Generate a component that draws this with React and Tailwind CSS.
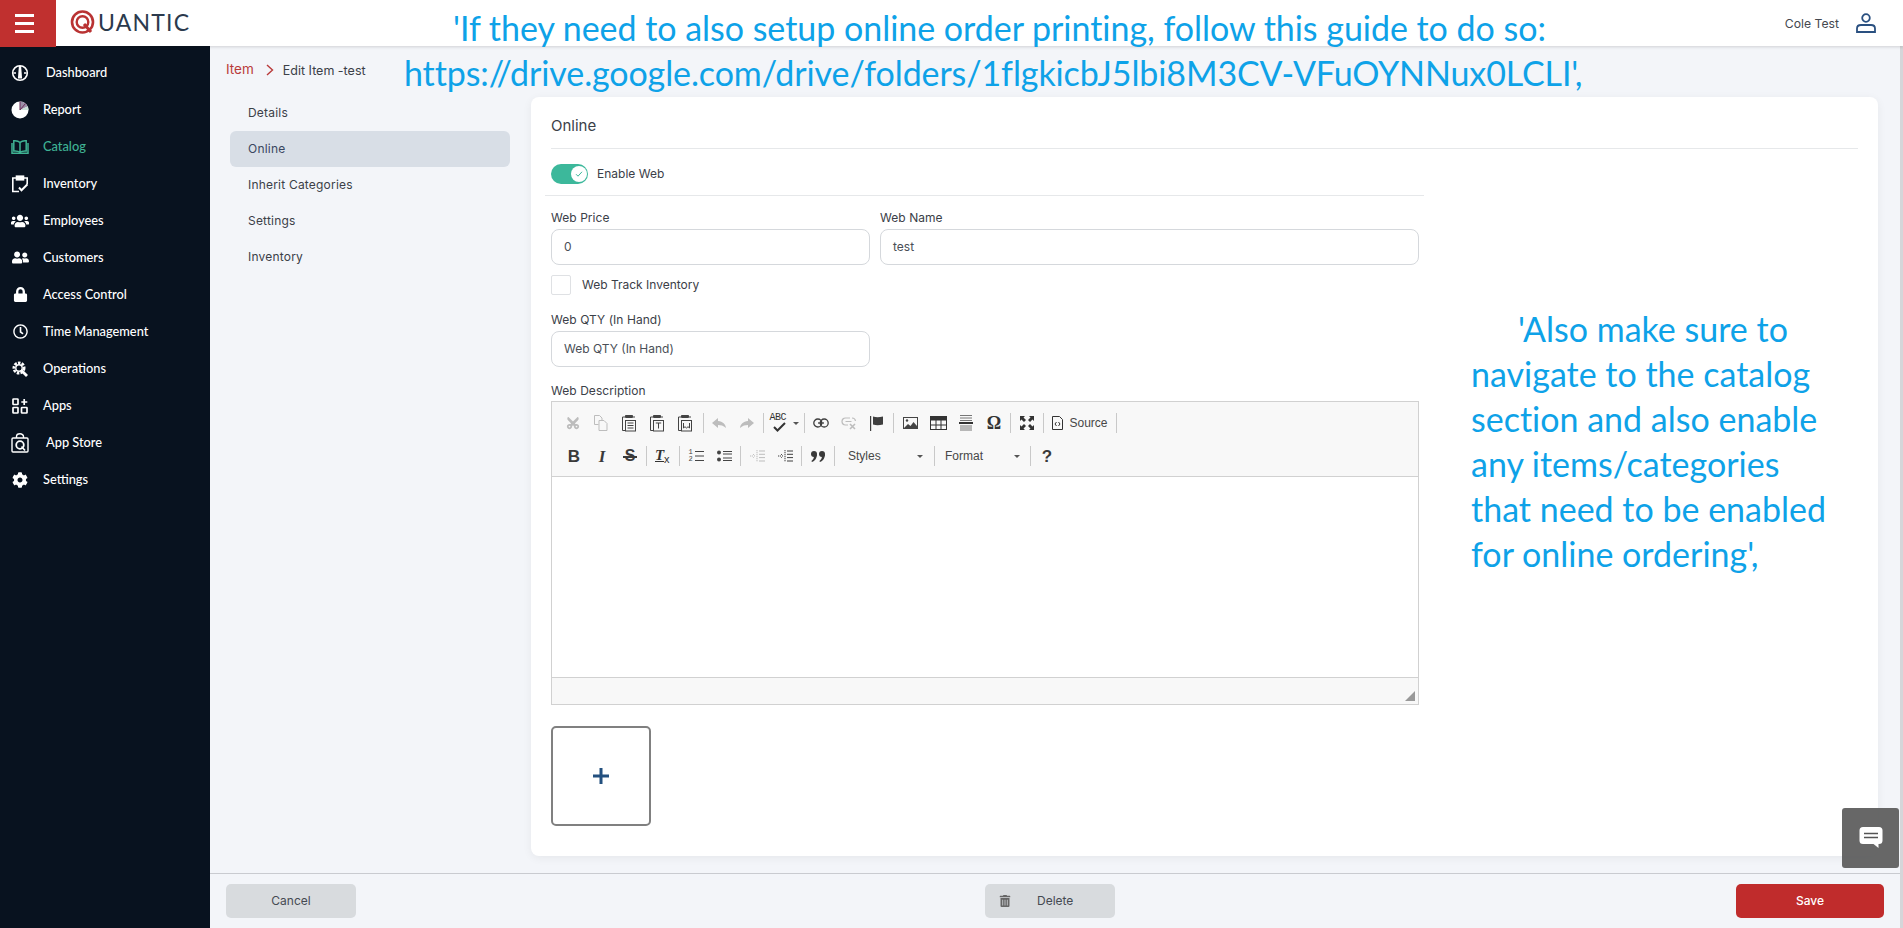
import React from "react";
import { FaUsers, FaUserFriends, FaLock, FaCog, FaRegClock, FaTrashAlt, FaCut } from "react-icons/fa";

const base = "font-['Inter','Liberation_Sans',sans-serif]";

function Logo() {
  return (
    <div className="flex items-center ml-[14px] mb-[2px]">
      <svg width="26" height="26" viewBox="0 0 26 26" fill="none">
        <circle cx="12.5" cy="13" r="10.5" stroke="#b93333" strokeWidth="2.6" />
        <circle cx="12.5" cy="13" r="5.8" stroke="#b93333" strokeWidth="2.4" />
        <path d="M14 15l7 8" stroke="#b93333" strokeWidth="3" />
      </svg>
      <span className="font-['Lato',sans-serif] text-[23px] leading-none tracking-[1.2px] text-[#2b3a4d] ml-[2px]">UANTIC</span>
    </div>
  );
}

function IconDash() {
  return (
    <svg width="18" height="18" viewBox="0 0 18 18" fill="none">
      <circle cx="9" cy="9" r="7.3" stroke="#fff" strokeWidth="1.6" />
      <path d="M2.5 9h2.5M13 9h2.5" stroke="#fff" strokeWidth="1.4" />
      <path d="M7.9 2h2.2l1 12.5H6.9z" fill="#fff" />
    </svg>
  );
}
function IconReport() {
  return (
    <svg width="18" height="18" viewBox="0 0 18 18">
      <circle cx="9" cy="9" r="8.5" fill="#fff" />
      <path d="M9 9V.5a8.5 8.5 0 0 1 7.6 5z" fill="#9b8fa8" />
      <path d="M9 9l7.6-3.5a8.5 8.5 0 0 1 .9 3.5z" fill="#c9e0d6" />
      <path d="M9 9V.5M9 9l5.5-6.5" stroke="#6a2a55" strokeWidth="1" fill="none" />
    </svg>
  );
}
function IconBook() {
  return (
    <svg width="18" height="16" viewBox="0 0 18 16" fill="none" stroke="#3fb394" strokeWidth="1.5">
      <path d="M9 3.5C7.5 2 5 1.5 2.8 1.7V12c2.2-.2 4.7.2 6.2 1.5 1.5-1.3 4-1.7 6.2-1.5V1.7C13 1.5 10.5 2 9 3.5zM9 3.5v10" />
      <path d="M1 4v10.2h16V4" />
    </svg>
  );
}
function IconInv() {
  return (
    <svg width="18" height="18" viewBox="0 0 18 18" fill="none" stroke="#fff" strokeWidth="1.6">
      <path d="M5.5 3H1.8v13.5H8M12.5 3h3.7v6" />
      <rect x="5.5" y="1.2" width="7" height="3.6" fill="#fff" />
      <path d="M8 12.5l2.5 2.8 6-6" strokeWidth="2" />
    </svg>
  );
}
function IconOps() {
  return (
    <svg width="18" height="18" viewBox="0 0 18 18" fill="none">
      <circle cx="8" cy="8" r="5.2" stroke="#fff" strokeWidth="2.6" strokeDasharray="2.6 1.2" />
      <circle cx="8" cy="8" r="3.2" stroke="#fff" strokeWidth="1.4" />
      <path d="M10 10l6 6" stroke="#fff" strokeWidth="2.8" />
    </svg>
  );
}
function IconApps() {
  return (
    <svg width="16" height="16" viewBox="0 0 16 16" fill="none" stroke="#fff" strokeWidth="1.7">
      <rect x="1" y="1" width="5" height="5.5" rx="0.6" />
      <rect x="1" y="9.5" width="5" height="5.5" rx="0.6" />
      <rect x="9.5" y="9.5" width="5.5" height="5.5" rx="0.6" />
      <path d="M12.2 1v6M9.3 4h6" />
    </svg>
  );
}
function IconStore() {
  return (
    <svg width="18" height="20" viewBox="0 0 18 20" fill="none" stroke="#fff" strokeWidth="1.4">
      <rect x="1" y="5" width="16" height="14" rx="1" />
      <path d="M5.5 5V3.5a3.5 2.7 0 0 1 7 0V5" />
      <circle cx="9" cy="12" r="3.8" strokeWidth="1.8" />
      <path d="M10.5 13.5l3.5 4" strokeWidth="1.6" />
    </svg>
  );
}

const nav = [
  ["Dashboard", <IconDash />, "ml-[17px]"],
  ["Report", <IconReport />, "ml-[14px]"],
  ["Catalog", <IconBook />, "ml-[14px]", true],
  ["Inventory", <IconInv />, "ml-[14px]"],
  ["Employees", <FaUsers size={18} color="#fff" />, "ml-[14px]"],
  ["Customers", <FaUserFriends size={17} color="#fff" />, "ml-[14px]"],
  ["Access Control", <FaLock size={15} color="#fff" />, "ml-[14px]"],
  ["Time Management", <FaRegClock size={15} color="#fff" />, "ml-[14px]"],
  ["Operations", <IconOps />, "ml-[14px]"],
  ["Apps", <IconApps />, "ml-[14px]"],
  ["App Store", <IconStore />, "ml-[17px]"],
  ["Settings", <FaCog size={16} color="#fff" />, "ml-[14px]"],
];

function Sidebar() {
  return (
    <aside className="w-[210px] shrink-0 bg-[#08121f] pt-[8px] flex flex-col">
      {nav.map(([label, icon, ml, active]) => (
        <div key={label} className="h-[37px] flex items-center pl-[11px]">
          <span className="w-[18px] flex justify-center">{icon}</span>
          <span className={`${ml} font-['Lato',sans-serif] text-[12.8px] font-medium ${active ? "text-[#3fb394]" : "text-white"}`}>{label}</span>
        </div>
      ))}
    </aside>
  );
}

const tabs = ["Details", "Online", "Inherit Categories", "Settings", "Inventory"];

function Sep({ cls = "mx-[2px]" }) {
  return <span className={`w-px h-[20px] bg-[#c9c9c9] shrink-0 ${cls}`} />;
}
function Btn({ children, dim }) {
  return <span className={`w-[28px] h-[24px] flex items-center justify-center shrink-0 ${dim ? "text-[#bdbdbd]" : "text-[#3f3f3f]"}`}>{children}</span>;
}
function Ico({ w = 16, h = 16, children, ...p }) {
  return <svg width={w} height={h} viewBox={`0 0 ${w} ${h}`} fill="none" stroke="currentColor" {...p}>{children}</svg>;
}
function CopyIcon() {
  return (
    <Ico strokeWidth="1">
      <path d="M1.5.5h5l2.5 2.5v3M1.5.5v9h4" />
      <path d="M6 5.5h5l3 3v7H6z" />
    </Ico>
  );
}
function PasteIcon({ mark }) {
  return (
    <svg width="16" height="18" viewBox="0 0 16 18" fill="none" stroke="#444" strokeWidth="1">
      <path d="M4 3H1.5v13.5H4M12 3h2" />
      <path d="M4.5 3.5V1.5h7v2z" fill="#444" />
      <rect x="4.5" y="6.5" width="10" height="10.5" />
      {mark === "list" && <path d="M6.5 9h6M6.5 11.5h6M6.5 14h6" />}
      {mark === "T" && <path d="M6.8 9h5.4M9.5 9v5.5" />}
      {mark === "W" && <path d="M6.5 9v5l1.5-1.3 1.5 1.3 1.5-1.3 1.5 1.3V9" />}
    </svg>
  );
}
function Undo() {
  return <svg width="14" height="12" viewBox="0 0 14 12" fill="currentColor"><path d="M6 1L0 6l6 5V8c3 0 5 .6 8 3-.5-4-3-6.500-8-7z" /></svg>;
}
function Redo() {
  return <svg width="14" height="12" viewBox="0 0 14 12" fill="currentColor"><path d="M8 1l6 5-6 5V8c-3 0-5 .6-8 3 .5-4 3-6.500 8-7z" /></svg>;
}
function Spell() {
  return (
    <span className="w-[36px] h-[24px] flex items-center justify-center gap-[3px] shrink-0">
      <span className="relative w-[20px] h-[20px]">
        <span className="absolute left-0 top-[-1px] font-['Liberation_Mono',monospace] text-[10px] tracking-[-0.5px] leading-[11px] text-[#333]">ABC</span>
        <svg className="absolute left-[3px] top-[9px]" width="13" height="10" viewBox="0 0 13 10" fill="none" stroke="#333" strokeWidth="2"><path d="M1 5l3.500 3.500L12 1" /></svg>
      </span>
      <Caret />
    </span>
  );
}
function Caret() {
  return <span className="w-0 h-0 border-x-[3px] border-x-transparent border-t-[3px] border-t-[#555] shrink-0" />;
}
function LinkIcon() {
  return (
    <Ico h={10} strokeWidth="1.3">
      <rect x=".8" y="1" width="8" height="8" rx="4" />
      <rect x="7.200" y="1" width="8" height="8" rx="4" />
      <path d="M5 5h6" />
    </Ico>
  );
}
function UnlinkIcon() {
  return (
    <Ico h={13} strokeWidth="1.2">
      <path d="M9 1H4.500a3.500 3.500 0 0 0 0 7H7M4.500 4.500h6M11 1a3.500 3.500 0 0 1 3.500 3" />
      <path d="M9 7l5 5M14 7l-5 5" strokeWidth="1.600" />
    </Ico>
  );
}
function FlagIcon() {
  return (
    <svg width="14" height="15" viewBox="0 0 14 15" fill="currentColor" stroke="none"><rect x="0" y="0" width="1.200" height="15" /><path d="M3 .5c3 1 6 1 10 0v8c-4 1-7 1-10 0z" /></svg>
  );
}
function ImageIcon() {
  return (
    <svg width="15" height="12" viewBox="0 0 15 12"><rect width="15" height="12" fill="#444" /><rect x="1" y="1" width="13" height="10" fill="#f8f8f8" /><path d="M1 11l4-4 2.500 2 3-4L14 9v2z" fill="#444" /><circle cx="4" cy="3.500" r="1.200" fill="#444" /></svg>
  );
}
function Hr() {
  return (
    <svg width="16" height="16" viewBox="0 0 16 16" stroke="#555"><path d="M2 .5h12M2 3h12M2 5.500h12M2 11h12M2 13h12M2 15h12" strokeWidth="0.8" /><path d="M1 8h14" strokeWidth="2" stroke="#333" /></svg>
  );
}
function TableIcon() {
  return (
    <svg width="17" height="14" viewBox="0 0 17 14" fill="none" stroke="#333"><rect x=".5" y=".5" width="16" height="13" /><rect x=".5" y=".5" width="16" height="3.500" fill="#333" /><path d="M6 4v10M11 4v10M0 9h17" /></svg>
  );
}
function MaxIcon() {
  return (
    <svg width="14" height="14" viewBox="0 0 14 14" fill="#333"><path d="M0 0h5L3.500 1.500 6 4 4 6 1.500 3.500 0 5zM14 0v5l-1.500-1.500L10 6 8 4l2.500-2.500L9 0zM0 14V9l1.500 1.500L4 8l2 2-2.500 2.500L5 14zM14 14H9l1.500-1.500L8 10l2-2 2.500 2.500L14 9z" /></svg>
  );
}
function SourceIcon() {
  return (
    <svg width="11" height="14" viewBox="0 0 11 14" fill="none" stroke="#333"><path d="M.5.5h7l3 3v10H.5z" /><path d="M4.500 6L3 8l1.500 2M6.500 6L8 8l-1.500 2" /></svg>
  );
}
function ClearFmt() {
  return (
    <span className="relative w-[16px] h-[16px] font-['Liberation_Serif',serif] italic font-bold text-[15px] leading-[15px] text-[#333]">
      <span className="underline">T</span>
      <span className="absolute left-[9px] top-[6px] not-italic font-['Liberation_Sans',sans-serif] font-normal text-[11px] leading-[10px]">x</span>
    </span>
  );
}
function OlIcon() {
  return (
    <span className="flex items-center gap-[2px] text-[#444]">
      <span className="font-['Liberation_Mono',monospace] text-[7px] leading-[7px] w-[4px]">1<br />2</span>
      <Ico w={9} h={12} strokeWidth="1"><path d="M0 1.500h9M0 6h9M0 10.500h9" /></Ico>
    </span>
  );
}
function UlIcon() {
  return (
    <svg width="15" height="12" viewBox="0 0 15 12" fill="none" stroke="#444"><circle cx="2" cy="2.500" r="2" fill="#444" stroke="none" /><circle cx="2" cy="9.500" r="2" fill="#444" stroke="none" /><path d="M6 1.500h9M6 4h9M6 8h9M6 10.500h9" /></svg>
  );
}
function IndentIcon() {
  return (
    <Ico w={15} h={12} strokeWidth="1">
      <path d="M0 6h3M3 4l2 2-2 2M7 0v12" strokeDasharray="1.300 0.700" />
      <path d="M9 1h6M9 4.300h6M9 7.600h6M9 11h6" />
    </Ico>
  );
}
function Quote() {
  return (
    <svg width="14" height="11" viewBox="0 0 14 11" fill="#3a3a3a"><circle cx="3" cy="3" r="3" /><path d="M6 3c0 4-2 7-5 8l-.6-1C2 9 3 7 3 5z" /><circle cx="11" cy="3" r="3" /><path d="M14 3c0 4-2 7-5 8l-.6-1C10 9 11 7 11 5z" /></svg>
  );
}
const glyph = "font-['Liberation_Sans',sans-serif] font-bold leading-none text-[#3a3a3a]";

function Toolbar() {
  return (
    <div className="h-[75px] bg-[#f8f8f8] border-b border-[#d1d1d1] pt-[9px] flex flex-col gap-[9px]">
      <div className="flex items-center h-[24px] pl-[7px]">
        <Btn dim><FaCut size={14} className="-rotate-90" /></Btn>
        <Btn dim><CopyIcon /></Btn>
        <Btn><PasteIcon mark="list" /></Btn>
        <Btn><PasteIcon mark="T" /></Btn>
        <Btn><PasteIcon mark="W" /></Btn>
        <Sep cls="ml-[4px] mr-px" />
        <Btn dim><Undo /></Btn>
        <Btn dim><Redo /></Btn>
        <Sep />
        <Spell />
        <Sep />
        <Btn><LinkIcon /></Btn>
        <Btn dim><UnlinkIcon /></Btn>
        <Btn><FlagIcon /></Btn>
        <Sep />
        <Btn><ImageIcon /></Btn>
        <Btn><TableIcon /></Btn>
        <Btn><Hr /></Btn>
        <Btn><span className="font-['Liberation_Serif',serif] font-bold text-[18px] leading-none text-[#333]">Ω</span></Btn>
        <Sep />
        <Btn><MaxIcon /></Btn>
        <Sep />
        <span className="w-[68px] flex items-center justify-center gap-[6px] shrink-0">
          <SourceIcon />
          <span className="font-['Liberation_Sans',sans-serif] text-[12px] text-[#474747]">Source</span>
        </span>
        <Sep />
      </div>
      <div className="flex items-center h-[24px] pl-[8px]">
        <Btn><span className={`${glyph} text-[17px]`}>B</span></Btn>
        <Btn><span className="font-['Liberation_Serif',serif] italic font-bold text-[17px] leading-none text-[#3a3a3a]">I</span></Btn>
        <Btn>
          <span className="relative flex items-center justify-center">
            <span className={`${glyph} text-[16px]`}>S</span>
            <span className="absolute left-[-2px] right-[-2px] top-1/2 h-[2px] bg-[#3a3a3a]" />
          </span>
        </Btn>
        <Sep />
        <Btn><ClearFmt /></Btn>
        <Sep />
        <Btn><OlIcon /></Btn>
        <Btn><UlIcon /></Btn>
        <Sep />
        <Btn dim><IndentIcon /></Btn>
        <Btn><IndentIcon /></Btn>
        <Sep />
        <Btn><Quote /></Btn>
        <Sep />
        <span className="w-[95px] pl-[11px] pr-[9px] flex items-center justify-between shrink-0 font-['Liberation_Sans',sans-serif] text-[12px] text-[#474747]">Styles<Caret /></span>
        <Sep />
        <span className="w-[91px] pl-[8px] pr-[8px] flex items-center justify-between shrink-0 font-['Liberation_Sans',sans-serif] text-[12px] text-[#474747]">Format<Caret /></span>
        <Sep />
        <Btn><span className={`${glyph} text-[17px]`}>?</span></Btn>
      </div>
    </div>
  );
}

function Field({ label, value, cls }) {
  return (
    <div className={cls}>
      <div className="h-[15px] leading-[15px] text-[12px] tracking-[0.05px] text-[#3b4048]">{label}</div>
      <div className="mt-[4px] h-[36px] border border-[#d5d8dc] rounded-[8px] pl-[12px] flex items-center text-[12px] text-[#4a4f57]">{value}</div>
    </div>
  );
}

function Card() {
  return (
    <section className="ml-[21px] w-[1347px] h-[759px] bg-white rounded-[8px] shadow-[0_2px_10px_rgba(0,0,0,0.06)] pt-[20px] pl-[20px] pr-[20px]">
      <h2 className="h-[18px] leading-[18px] text-[15px] font-normal text-[#3b4048]">Online</h2>
      <div className="mt-[13px] h-px bg-[#e6e8ea]" />
      <div className="mt-[15px] h-[20px] flex items-center">
        <span className="relative w-[37px] h-[20px] rounded-full bg-[#3cb89b] block">
          <span className="absolute right-[1px] top-[2px] w-[16px] h-[16px] rounded-full bg-white flex items-center justify-center">
            <svg width="8" height="8" viewBox="0 0 8 8" fill="none" stroke="#3cb89b" strokeWidth="1"><path d="M1 4.200l2 2L7 1.800" /></svg>
          </span>
        </span>
        <span className="ml-[9px] text-[12px] text-[#3b4048]">Enable Web</span>
      </div>
      <div className="mt-[11px] ml-[-6px] w-[879px] h-px bg-[#e6e8ea]" />
      <div className="w-[868px] mt-[14px]">
        <div className="flex gap-[10px]">
          <Field label="Web Price" value="0" cls="w-[319px]" />
          <Field label="Web Name" value="test" cls="w-[539px]" />
        </div>
        <div className="mt-[10px] h-[20px] flex items-center">
          <span className="w-[20px] h-[20px] border border-[#dfe1e4] rounded-[2px]" />
          <span className="ml-[11px] text-[12px] text-[#3b4048]">Web Track Inventory</span>
        </div>
        <Field label="Web QTY (In Hand)" value="Web QTY (In Hand)" cls="w-[319px] mt-[17px]" />
        <div className="mt-[16px] h-[15px] leading-[15px] text-[12px] tracking-[0.05px] text-[#3b4048]">Web Description</div>
        <div className="mt-[3px] h-[304px] border border-[#d1d1d1] flex flex-col">
          <Toolbar />
          <div className="flex-1 bg-white" />
          <div className="h-[27px] bg-[#f8f8f8] border-t border-[#d1d1d1] flex items-end justify-end p-[3px]">
            <svg width="10" height="10" viewBox="0 0 10 10" fill="#999"><path d="M10 0v10H0z" /></svg>
          </div>
        </div>
        <div className="mt-[21px] w-[100px] h-[100px] border-2 border-[#808080] rounded-[5px] flex items-center justify-center">
          <svg width="16" height="16" viewBox="0 0 16 16" fill="none" stroke="#23507f" strokeWidth="3"><path d="M8 0v16M0 8h16" /></svg>
        </div>
      </div>
    </section>
  );
}

export default function App() {
  return (
    <div className={`${base} relative h-[928px] w-full overflow-hidden bg-[#f3f5f9] flex flex-col`}>
      <header className="h-[46px] shrink-0 bg-white shadow-[0_1px_3px_rgba(0,0,0,0.15)] flex items-center relative z-20">
        <div className="w-[56px] h-[47px] self-start bg-[#c0302f] flex flex-col items-start justify-center gap-[5px] pl-[15px]">
          <span className="w-[19px] h-[3px] bg-white" />
          <span className="w-[19px] h-[3px] bg-white" />
          <span className="w-[19px] h-[3px] bg-white" />
        </div>
        <Logo />
        <div className="ml-auto flex items-center pr-[27px]">
          <span className="text-[12.2px] text-[#44484f] mt-[2px]">Cole Test</span>
          <svg className="ml-[17px]" width="20" height="20" viewBox="0 0 20 20" fill="none" stroke="#2a5080" strokeWidth="1.8">
            <circle cx="10" cy="5" r="3.8" />
            <path d="M1 19v-3.500c0-2.500 2-3.500 4-3.500h10c2 0 4 1 4 3.500V19z" />
          </svg>
        </div>
      </header>
      <div className="flex-1 flex min-h-0">
        <Sidebar />
        <main className="flex-1 flex flex-col min-w-0">
          <div className="flex-1 min-h-0 flex flex-col">
            <div className="h-[51px] flex items-start pl-[16px] pt-[15px]">
              <span className="text-[13.5px] leading-[16px] text-[#b93a3a]">Item</span>
              <svg className="ml-[12px] mt-[3px]" width="8" height="12" viewBox="0 0 8 12" fill="none" stroke="#b93a3a" strokeWidth="1.4"><path d="M1 1l5.500 5L1 11" /></svg>
              <span className="ml-[9px] mt-[2px] text-[12.5px] leading-[16px] text-[#3b4048]">Edit Item -test</span>
            </div>
            <div className="flex">
              <nav className="w-[300px] pl-[20px] shrink-0 -mt-[2px]">
                <div className="flex flex-col">
                  {tabs.map((t) => (
                    <div key={t} className={`h-[36px] rounded-[6px] flex items-center pl-[18px] text-[12px] tracking-[0.2px] ${t === "Online" ? "bg-[#d8dee6] text-[#3a4760]" : "text-[#3b4048]"}`}>{t}</div>
                  ))}
                </div>
              </nav>
              <Card />
            </div>
          </div>
          <footer className="h-[55px] shrink-0 border-t border-[#c9cbd0] flex items-start justify-between pt-[10px] pl-[16px] pr-[19px]">
            <button className="w-[130px] h-[34px] rounded-[5px] bg-[#d8dbde] text-[12px] text-[#454a52]">Cancel</button>
            <button className="w-[130px] h-[34px] rounded-[5px] bg-[#d8dbde] text-[12px] text-[#454a52] flex items-center pl-[14px] ml-[8px]">
              <FaTrashAlt size={12} color="#666" />
              <span className="ml-[26px]">Delete</span>
            </button>
            <button className="w-[148px] h-[34px] rounded-[5px] bg-[#c02c2c] text-[12px] font-medium text-white">Save</button>
          </footer>
        </main>
      </div>

      <div className="absolute right-[4px] top-[808px] w-[57px] h-[60px] rounded-[3px] bg-[#5f5f5f]/95 flex items-center justify-center z-30">
        <svg width="24" height="22" viewBox="0 0 24 22">
          <path d="M4 0h16a3.500 3.500 0 0 1 3.500 3.500v10A3.500 3.500 0 0 1 20 17h-.5v4l-5-4H4A3.500 3.500 0 0 1 .5 13.500v-10A3.500 3.500 0 0 1 4 0z" fill="#fff" />
          <path d="M5 6.500h14M5 10.500h14" stroke="#555" strokeWidth="1.400" />
        </svg>
      </div>
      <div className="absolute right-0 top-[40px] bottom-0 w-[3px] bg-[#d5d6d9] z-10" />

      <div className="absolute left-[404px] top-[5px] w-[1200px] font-['Lato',sans-serif] text-[34px] leading-[45px] text-[#0ea2e8] z-40 [font-variant-ligatures:none] whitespace-nowrap">
        <div className="pl-[49px] tracking-[-0.03px]">'If they need to also setup online order printing, follow this guide to do so:</div>
        <div className="tracking-[-0.11px]">https://drive.google.com/drive/folders/1flgkicbJ5lbi8M3CV-VFuOYNNux0LCLI',</div>
      </div>
      <div className="absolute left-[1471px] top-[306px] w-[400px] font-['Lato',sans-serif] text-[34px] leading-[45px] text-[#0ea2e8] z-40 [font-variant-ligatures:none]">
        <div className="pl-[47px]">'Also make sure to</div>
        <div>navigate to the catalog</div>
        <div>section and also enable</div>
        <div>any items/categories</div>
        <div>that need to be enabled</div>
        <div>for online ordering',</div>
      </div>
    </div>
  );
}
